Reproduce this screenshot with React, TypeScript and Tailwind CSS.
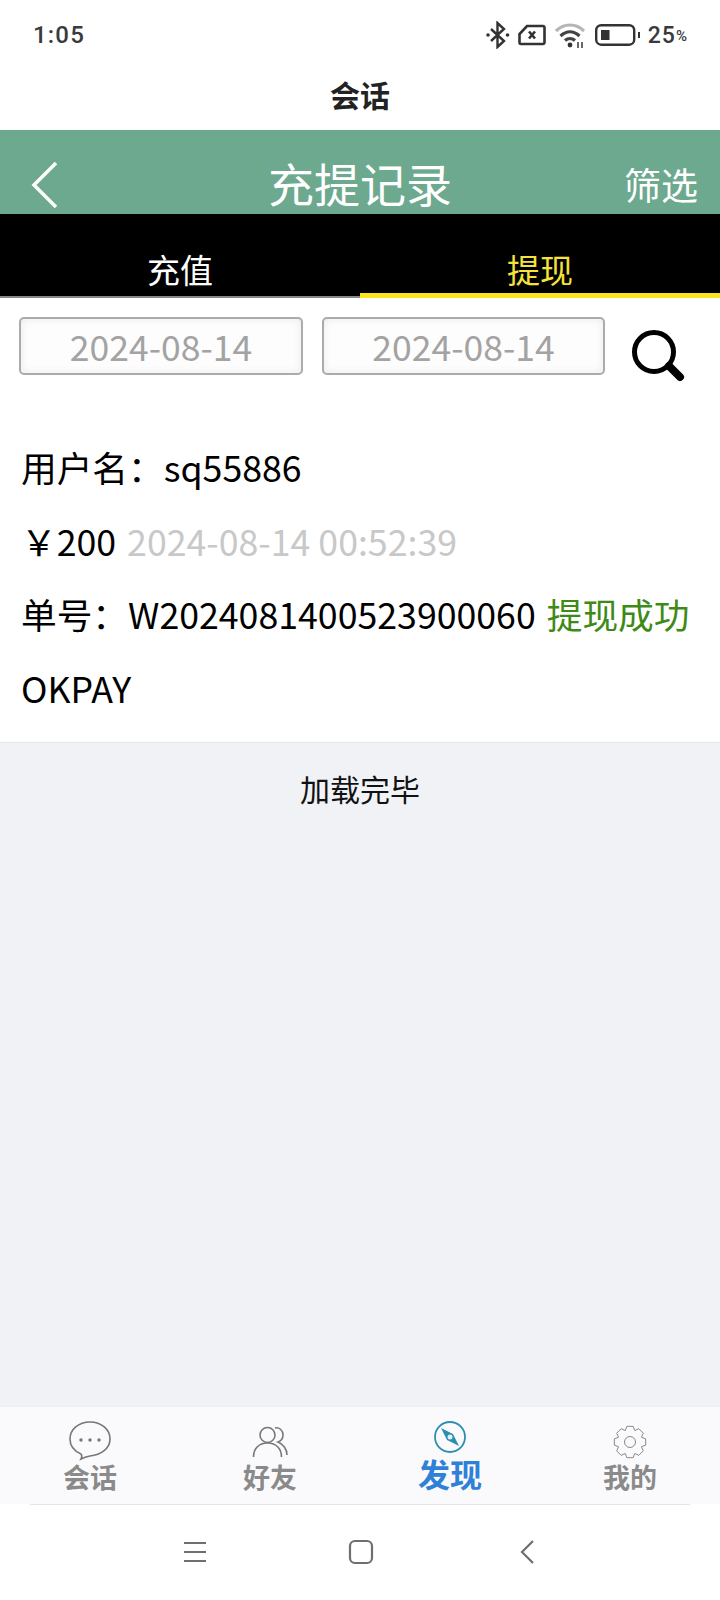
const cjk = "font-['Noto_Sans_CJK_SC','Noto_Sans',sans-serif]";

// 8 teeth, outline only
function gearPath() {
  const pts: string[] = [];
  for (let i = 0; i < 8; i++) {
    const a = (i * Math.PI) / 4;
    const steps: [number, number][] = [
      [12.5, -0.38],
      [16, -0.2],
      [16, 0.2],
      [12.5, 0.38],
    ];
    for (const [r, d] of steps) {
      pts.push(`${(17 + r * Math.cos(a + d)).toFixed(2)} ${(17 + r * Math.sin(a + d)).toFixed(2)}`);
    }
  }
  return `M${pts.join("L")}Z`;
}

function StatusBar() {
  return (
    <div className="flex h-[70px] items-center justify-between pb-[1px] pl-[33px] pr-[33px] font-['Roboto',sans-serif] text-[#3a3a3c]">
      <span className="text-[24px] font-medium tracking-[1.2px]">1:05</span>
      <div className="flex items-center">
        {/* bluetooth */}
        <svg width="26" height="28" viewBox="0 0 26 28" fill="none" stroke="#333" strokeWidth="2.4" className="mr-[7px]">
          <path d="M6 8l13 12-6.500 6V2l6.500 6L6 20" />
          <circle cx="3" cy="14" r="1.800" fill="#333" stroke="none" />
          <circle cx="22.500" cy="14" r="1.800" fill="#333" stroke="none" />
        </svg>
        {/* sim with x */}
        <svg width="28" height="24" viewBox="0 0 28 24" fill="none" stroke="#333" strokeWidth="2.600" className="mr-[8px]">
          <path d="M9 3h16a1.500 1.500 0 0 1 1.500 1.500v15a1.500 1.500 0 0 1-1.500 1.500H3a1.500 1.500 0 0 1-1.500-1.500V11z" />
          <path d="M11 8.500l6 7M17 8.500l-6 7" />
        </svg>
        {/* wifi */}
        <svg width="32" height="28" viewBox="0 0 32 28" fill="none" strokeWidth="3.200" className="mr-[9px]">
          <path d="M2 10c8-8 20-8 28 0" stroke="#b5b5b5" />
          <path d="M6.500 15c6-5.500 13-5.500 19 0" stroke="#444" />
          <path d="M11 19.500c3-2.500 7-2.500 10 0" stroke="#444" />
          <circle cx="16" cy="24" r="2.400" fill="#333" stroke="none" />
          <path d="M24 21v6M28 27v-6" stroke="#444" strokeWidth="1.600" />
        </svg>
        {/* battery */}
        <svg width="46" height="24" viewBox="0 0 46 24" fill="none" className="mr-[7px]">
          <rect x="1.200" y="2.200" width="38" height="19.500" rx="5" stroke="#333" strokeWidth="2.400" />
          <rect x="6" y="7" width="8.500" height="10" fill="#333" />
          <rect x="43" y="9" width="2" height="6" fill="#333" />
        </svg>
        <span className="mt-[3px] text-[23px] font-medium tracking-[1px]">25</span>
        <span className="mt-[4px] text-[15px] font-medium">%</span>
      </div>
    </div>
  );
}

function SearchIcon() {
  return (
    <svg width="56" height="54" viewBox="0 0 56 54" fill="none" stroke="#000">
      <circle cx="24" cy="23" r="19.500" strokeWidth="5" />
      <path d="M39 37l11 11" strokeWidth="8" strokeLinecap="round" />
    </svg>
  );
}

function DateBox({ value, width }: { value: string; width: string }) {
  return (
    <div
      className={`${width} flex h-[58px] items-center justify-center rounded-[5px] border-2 border-[#ababab] bg-[#fdfdfd] text-[35.5px] text-[#a3a3a3] shadow-[inset_0_0_8px_rgba(0,0,0,0.08)]`}
    >
      {value}
    </div>
  );
}

function Tab({ label, icon, active }: { label: string; icon: React.ReactNode; active?: boolean }) {
  return (
    <div className="flex flex-col items-center">
      <div className="flex h-[54px] items-end justify-center">{icon}</div>
      <span
        className={
          active
            ? "mt-[-7px] text-[32px] leading-[38px] font-bold text-[#2f80d8]"
            : "mt-[-1px] text-[27px] leading-[34px] font-bold text-[#8a8a8a]"
        }
      >
        {label}
      </span>
    </div>
  );
}

export default function App() {
  return (
    <div className={`${cjk} flex h-[1600px] w-[720px] flex-col overflow-hidden bg-white`}>
      <StatusBar />
      <div className="flex h-[60px] items-center justify-center pb-[12px] text-[30px] font-bold text-[#222]">会话</div>

      {/* header */}
      <div className="relative flex h-[84px] items-center justify-between bg-[#6da98e] pl-[30px] pr-[22px] text-white">
        <svg width="30" height="50" viewBox="0 0 30 50" fill="none" stroke="#fff" strokeWidth="3.500" className="mt-[26px]">
          <path d="M26 3L4 25l22 22" />
        </svg>
        <span className="absolute left-0 right-0 top-[19px] text-center text-[46px] leading-[66px]">充提记录</span>
        <span className="mt-[26px] text-[37px]">筛选</span>
      </div>

      {/* tabs */}
      <div className="grid h-[84px] grid-cols-2 bg-black text-[33px] text-white">
        <div className="flex items-end justify-center border-b-2 border-[#888] leading-[44px]">
          <span className="mb-[5px]">充值</span>
        </div>
        <div className="flex items-end justify-center border-b-[5px] border-[#fbe61e] leading-[44px] text-[#f5e23a]">
          <span className="mb-[2px]">提现</span>
        </div>
      </div>

      {/* filter */}
      <div className="flex items-start pl-[19px] pt-[19px]">
        <DateBox value="2024-08-14" width="w-[284px]" />
        <div className="ml-[19px]">
          <DateBox value="2024-08-14" width="w-[283px]" />
        </div>
        <div className="ml-[25px] mt-[12px]">
          <SearchIcon />
        </div>
      </div>

      {/* record */}
      <div className="h-[360px] border-b border-[#e6e6e6] pl-[21px] pt-[53px] text-[35.7px] text-black">
        <div className="h-[74px] leading-[62px]">用户名：sq55886</div>
        <div className="h-[73px] leading-[62px]">
          ￥200 <span className="ml-[3px] text-[#c8c8c8]">2024-08-14 00:52:39</span>
        </div>
        <div className="h-[74px] leading-[62px]">
          单号：W2024081400523900060 <span className="ml-[3px] text-[#3d8a16]">提现成功</span>
        </div>
        <div className="leading-[62px]">OKPAY</div>
      </div>

      <div className="flex-1 bg-[#f0f2f6] pt-[22px] text-center text-[30px] leading-[46px] text-[#111]">加载完毕</div>

      {/* bottom tabs */}
      <div className="grid h-[98px] grid-cols-4 border-t border-[#eeeeee] bg-[#fafafc]">
        <Tab
          label="会话"
          icon={
            <svg width="44" height="41" viewBox="0 0 44 41" fill="none" stroke="#777" strokeWidth="1.600">
              <path d="M22 2c11.500 0 20 7.500 20 17s-9 16-20 17c-3 .3-5 1-9 3 1-2 1.500-3.500 0-5C6 31 2 26 2 19 2 9.500 10.500 2 22 2z" />
              <circle cx="13" cy="20" r="1.700" fill="#777" stroke="none" />
              <circle cx="22" cy="20" r="1.700" fill="#777" stroke="none" />
              <circle cx="31" cy="20" r="1.700" fill="#777" stroke="none" />
            </svg>
          }
        />
        <Tab
          label="好友"
          icon={
            <svg width="36" height="32" viewBox="0 0 36 32" fill="none" stroke="#777" strokeWidth="1.600" className="mb-[3px]">
              <circle cx="15.500" cy="9" r="7.500" />
              <path d="M1.500 31c0-8 5-14 14-14s14 6 14 14" />
              <path d="M23 2c4-1 8 2 8 7 0 3-2 6-5 7 5 2 9 7 9 13" />
            </svg>
          }
        />
        <Tab
          active
          label="发现"
          icon={
            <svg width="34" height="34" viewBox="0 0 34 34" fill="none" className="mb-[7px]">
              <circle cx="17" cy="17" r="15" stroke="#2a8fb0" strokeWidth="1.800" />
              <path d="M8 8l12 6 6 12-12-6z" fill="#2a8fb0" />
              <circle cx="17" cy="17" r="2.500" fill="#e8eef2" />
            </svg>
          }
        />
        <Tab
          label="我的"
          icon={
            <svg width="34" height="34" viewBox="0 0 34 34" fill="none" stroke="#888" strokeWidth="1" className="mb-[2px]">
              <path d={gearPath()} />
              <circle cx="17" cy="17" r="5.500" />
            </svg>
          }
        />
      </div>

      {/* system nav */}
      <div className="flex h-[96px] shrink-0 flex-col items-center">
        <div className="h-px w-[660px] bg-[#e5e5e5]" />
        <div className="flex w-full flex-1 items-center pb-[1px] pl-[183px]">
          <svg width="24" height="22" viewBox="0 0 24 22" stroke="#6f6f6f" strokeWidth="2.200">
            <path d="M1 2h22M1 11h22M1 20h22" />
          </svg>
          <svg width="26" height="26" viewBox="0 0 26 26" fill="none" stroke="#6f6f6f" strokeWidth="2.200" className="ml-[141px]">
            <rect x="2" y="2" width="22" height="22" rx="5" />
          </svg>
          <svg width="16" height="26" viewBox="0 0 16 26" fill="none" stroke="#6f6f6f" strokeWidth="2.200" className="ml-[145px]">
            <path d="M14 2L3 13l11 11" />
          </svg>
        </div>
      </div>
    </div>
  );
}
